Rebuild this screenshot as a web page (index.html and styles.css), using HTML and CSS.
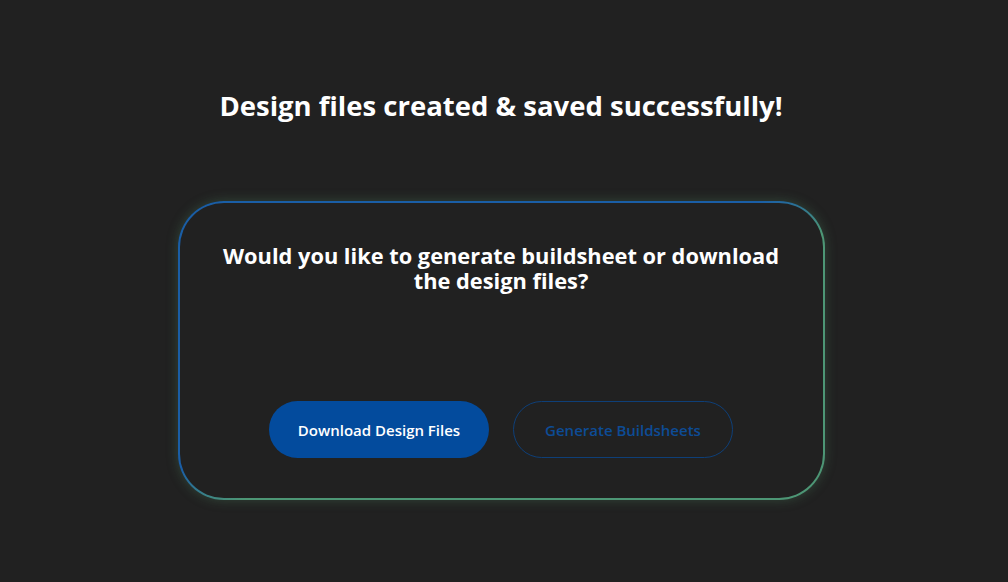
FILE: index.html
```html
<!DOCTYPE html>
<html lang="en">
<head>
    <meta charset="UTF-8">
    <meta name="viewport" content="width=device-width, initial-scale=1.0">
    <title>Design files saved</title>
    <link rel="stylesheet" href="styles.css">
</head>
<body>
    <main class="pagina">
        <h1 class="titulo">Design files created &amp; saved successfully!</h1>

        <div class="cartao">
            <h2 class="pergunta">Would you like to generate buildsheet or download<br>the design files?</h2>
            <div class="acoes">
                <button class="btn btn-primario">Download Design Files</button>
                <button class="btn btn-contorno">Generate Buildsheets</button>
            </div>
        </div>
    </main>
</body>
</html>
```

FILE: styles.css
```css
body {
    margin: 0;
    padding: 0;
    background-color: #212121;
    color: #fff;
    font-family: "Open Sans", "Noto Sans", sans-serif;
    min-height: 100vh;
}

.pagina {
    display: flex;
    flex-direction: column;
    align-items: center;
    padding: 87px 6px 0 0;
}

.titulo {
    margin: 0;
    font-size: 27.5px;
    font-weight: 700;
    line-height: 38px;
}

.cartao {
    box-sizing: border-box;
    width: 647px;
    height: 299px;
    margin-top: 76px;
    padding: 40px 20px 40px;
    border: 2px solid transparent;
    border-radius: 46px;
    background:
        linear-gradient(#212121, #212121) padding-box,
        linear-gradient(to bottom right, #1a5ea6 45%, #4d9675 55%) border-box;
    box-shadow: 0 0 12px rgba(80, 140, 100, 0.35);
    display: flex;
    flex-direction: column;
    justify-content: space-between;
    align-items: center;
}

.pergunta {
    margin: 0;
    font-size: 21.8px;
    font-weight: 700;
    line-height: 25px;
    text-align: center;
    white-space: nowrap;
}

.acoes {
    display: flex;
    gap: 24px;
}

.btn {
    width: 220px;
    height: 57px;
    border-radius: 29px;
    font-family: "Open Sans", sans-serif;
    font-size: 15px;
    font-weight: 600;
    cursor: pointer;
}

.btn-primario {
    background-color: #034b9d;
    color: #fff;
    border: none;
}

.btn-contorno {
    background-color: transparent;
    color: #0d4c96;
    border: 1px solid #0e3f78;
}
```
